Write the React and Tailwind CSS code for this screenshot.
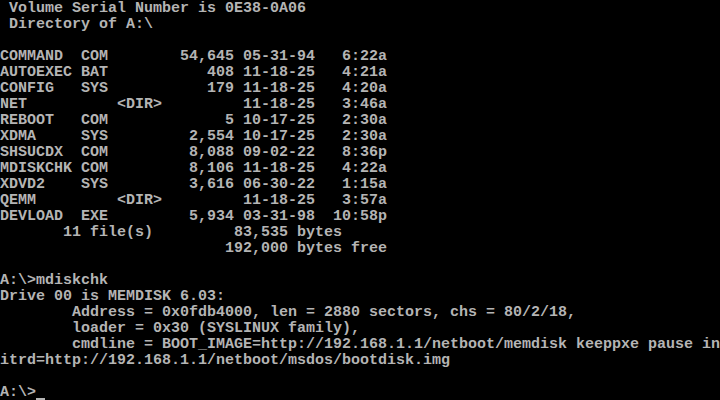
const files = [
  ["COMMAND", "COM", "54,645", "05-31-94", "6:22a"],
  ["AUTOEXEC", "BAT", "408", "11-18-25", "4:21a"],
  ["CONFIG", "SYS", "179", "11-18-25", "4:20a"],
  ["NET", "", "<DIR>", "11-18-25", "3:46a"],
  ["REBOOT", "COM", "5", "10-17-25", "2:30a"],
  ["XDMA", "SYS", "2,554", "10-17-25", "2:30a"],
  ["SHSUCDX", "COM", "8,088", "09-02-22", "8:36p"],
  ["MDISKCHK", "COM", "8,106", "11-18-25", "4:22a"],
  ["XDVD2", "SYS", "3,616", "06-30-22", "1:15a"],
  ["QEMM", "", "<DIR>", "11-18-25", "3:57a"],
  ["DEVLOAD", "EXE", "5,934", "03-31-98", "10:58p"],
];

// classic DIR listing columns: name(8) ext(3) size(14) date(8) time(6)
function dirLine([name, ext, size, date, time]) {
  const sizeField = size === "<DIR>" ? " <DIR>        " : size.padStart(14);
  return name.padEnd(8) + " " + ext.padEnd(3) + sizeField + " " + date + "  " + time.padStart(6);
}

const lines = [
  " Volume Serial Number is 0E38-0A06",
  " Directory of A:\\",
  "",
  ...files.map(dirLine),
  "       11 file(s)         83,535 bytes",
  "                         192,000 bytes free",
  "",
  "A:\\>mdiskchk",
  "Drive 00 is MEMDISK 6.03:",
  "        Address = 0x0fdb4000, len = 2880 sectors, chs = 80/2/18,",
  "        loader = 0x30 (SYSLINUX family),",
  "        cmdline = BOOT_IMAGE=http://192.168.1.1/netboot/memdisk keeppxe pause in",
  "itrd=http://192.168.1.1/netboot/msdos/bootdisk.img",
  "",
];

export default function App() {
  return (
    <div className="h-[400px] w-[720px] overflow-hidden bg-black pt-px font-['Liberation_Mono',monospace] text-[15px] font-bold leading-[16px] text-[#b4b4b4]">
      {lines.map((line, i) => (
        <div key={i} className="h-4 whitespace-pre">
          {line}
        </div>
      ))}
      <div className="h-4 whitespace-pre">
        A:\&gt;
        <span className="inline-block h-[15px] w-[9px] border-b-2 border-[#b4b4b4] align-top" />
      </div>
    </div>
  );
}
